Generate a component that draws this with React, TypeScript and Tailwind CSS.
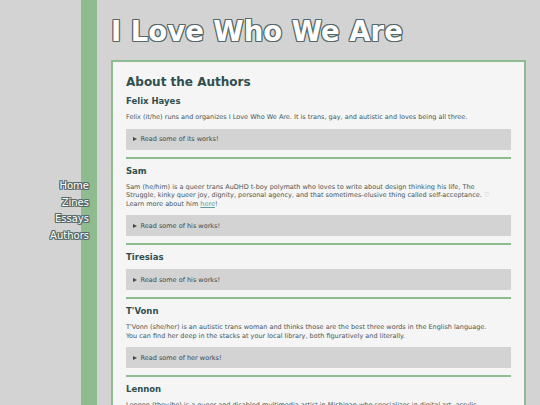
import React from "react";

const outline =
  "[text-shadow:-1px_-1px_0_#56696a,1px_-1px_0_#56696a,-1px_1px_0_#56696a,1px_1px_0_#56696a,0_1px_0_#56696a,0_-1px_0_#56696a,1px_0_0_#56696a,-1px_0_0_#56696a]";

function Works({ label }: { label: string }) {
  return (
    <details className="bg-[#d3d3d3]">
      <summary className="flex list-none items-center gap-[3.5px] py-[6.5px] pl-[7px] text-[6.5px] leading-[8px] text-[#3c4a4a] [&::-webkit-details-marker]:hidden">
        <span className="h-0 w-0 border-y-[2.5px] border-l-[4px] border-y-transparent border-l-[#3c4a4a]" />
        <span>{label}</span>
      </summary>
    </details>
  );
}

function Name({ children }: { children: React.ReactNode }) {
  return (
    <h3 className="text-[8.5px] font-bold leading-[10px] text-[#2f4f4f]">{children}</h3>
  );
}

function Para({ children }: { children: React.ReactNode }) {
  return <p className="text-[6.5px] leading-[8.5px] text-[#485656]">{children}</p>;
}

function Rule() {
  return <div className="h-[2px] bg-[#8fbc8f]" />;
}

export default function App() {
  return (
    <div className="flex min-h-screen bg-[#d3d3d3] font-['DejaVu_Sans',Verdana,sans-serif]">
      <aside className="w-[97px] shrink-0 bg-[linear-gradient(to_right,transparent_81px,#8fbc8f_81px)] pr-[8px] pt-[178px] text-right">
        <nav className={`flex flex-col text-[10px] leading-[16.5px] text-white ${outline}`}>
          <a href="#">Home</a>
          <a href="#">Zines</a>
          <a href="#">Essays</a>
          <a href="#">Authors</a>
        </nav>
      </aside>
      <main className="flex-1 px-[14px] pt-[15px]">
        <h1
          className={`mb-[13px] text-[27.5px] font-bold leading-[32px] text-white ${outline}`}
        >
          I Love Who We Are
        </h1>
        <section className="border-2 border-[#8fbc8f] bg-[#f5f5f5] px-[13px] pb-[20px] pt-[13px]">
          <h2 className="mb-[7px] text-[12px] font-bold leading-[14px] text-[#2f4f4f]">
            About the Authors
          </h2>
          <div className="flex flex-col gap-[7px]">
            <Name>Felix Hayes</Name>
            <Para>
              Felix (it/he) runs and organizes I Love Who We Are. It is trans, gay, and autistic
              and loves being all three.
            </Para>
            <Works label="Read some of its works!" />
            <Rule />
            <Name>Sam</Name>
            <Para>
              Sam (he/him) is a queer trans AuDHD t-boy polymath who loves to write about design
              thinking his life, The
              <br />
              Struggle, kinky queer joy, dignity, personal agency, and that sometimes-elusive thing
              called self-acceptance. <span className="text-[#9aa5a5]">♡</span>
              <br />
              Learn more about him{" "}
              <a href="#" className="text-[#5f9ea0] underline">
                here
              </a>
              !
            </Para>
            <Works label="Read some of his works!" />
            <Rule />
            <Name>Tiresias</Name>
            <Works label="Read some of his works!" />
            <Rule />
            <Name>T'Vonn</Name>
            <Para>
              T'Vonn (she/her) is an autistic trans woman and thinks those are the best three words
              in the English language.
              <br />
              You can find her deep in the stacks at your local library, both figuratively and
              literally.
            </Para>
            <Works label="Read some of her works!" />
            <Rule />
            <Name>Lennon</Name>
            <Para>
              Lennon (they/he) is a queer and disabled multimedia artist in Michigan who
              specializes in digital art, acrylic
              <br />
              painting, and zines.
            </Para>
            <Works label="Read some of their works!" />
          </div>
        </section>
      </main>
    </div>
  );
}
